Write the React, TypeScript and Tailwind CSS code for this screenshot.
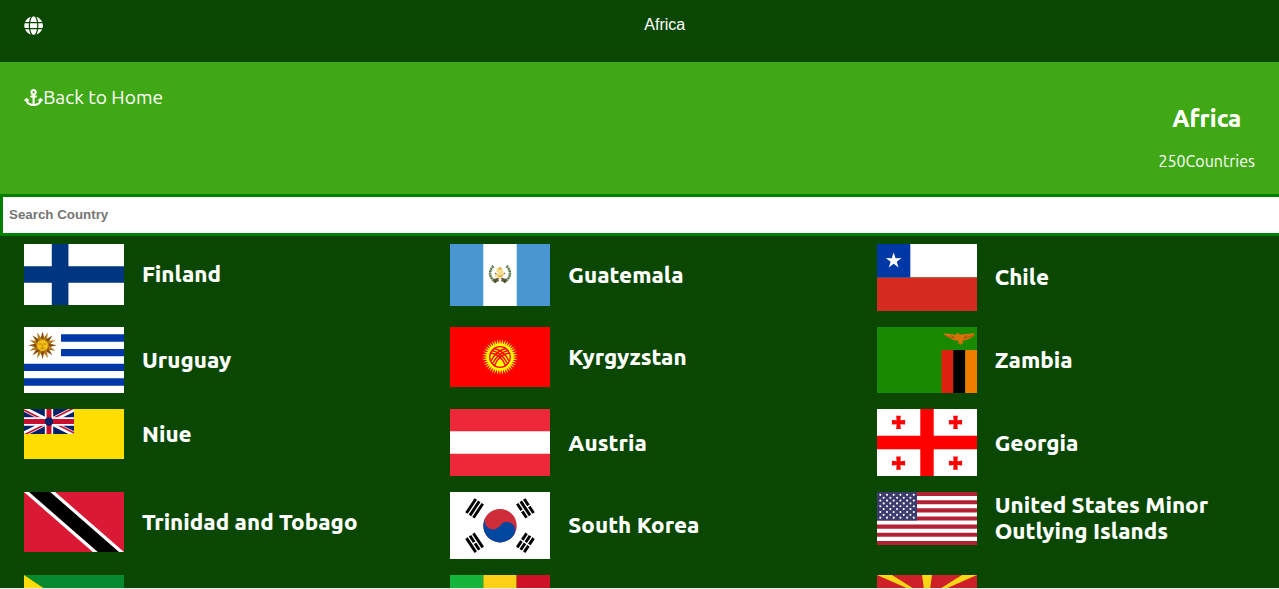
import { ReactNode } from "react";
import { FaAnchor, FaGlobe } from "react-icons/fa";

const range = (n: number) => Array.from({ length: n }, (_, i) => i);

function Flag({ h, box, children }: { h: number; box: string; children: ReactNode }) {
  return (
    <svg width={100} height={h} viewBox={box} preserveAspectRatio="none" className="block shrink-0">
      {children}
    </svg>
  );
}

const Finland = () => (
  <Flag h={61} box="0 0 18 11">
    <path fill="#fff" d="M0 0h18v11H0z" />
    <path fill="#003580" d="M0 4h18v3H0zM5 0h3v11H5z" />
  </Flag>
);

const Guatemala = () => (
  <Flag h={62} box="0 0 100 62">
    <path fill="#4997d0" d="M0 0h100v62H0z" />
    <path fill="#fff" d="M33.3 0h33.4v62H33.3z" />
    <g fill="none" stroke="#5c7c4b" strokeWidth="2.5" strokeDasharray="2 .5">
      <path d="M43.500 22c-5 5-5 12 3 16.500" />
      <path d="M56.500 22c5 5 5 12-3 16.500" />
    </g>
    <path d="M43.500 38l11.500-9M56.500 38l-11.500-9" stroke="#8a6a43" strokeWidth="1.300" />
    <path fill="#4d4a2b" d="M43 35l5-1 1 3-4 2zM57 35l-5-1-1 3 4 2z" opacity=".85" />
    <path fill="#f2dd8c" d="M46 27l1-3 4-1 2 3 1 4-2 4h-4l-4-2 4-3z" />
    <path fill="#d9b65a" d="M48 24l3-1 1 2-3 1zM48 31l5 0-1 2h-3z" />
  </Flag>
);

const Chile = () => (
  <Flag h={67} box="0 0 6 4">
    <path fill="#fff" d="M0 0h6v2H0z" />
    <path fill="#d52b1e" d="M0 2h6v2H0z" />
    <path fill="#0039a6" d="M0 0h2v2H0z" />
    <path fill="#fff" d="M1 .5l.112.345.364-.003-.295.212.115.345L1 1.183l-.296.216.115-.345-.295-.212.364.003z" />
  </Flag>
);

const Uruguay = () => (
  <Flag h={66} box="0 0 27 18">
    <path fill="#fff" d="M0 0h27v18H0z" />
    <path fill="#0038a8" d="M10 2h17v2H10zM10 6h17v2H10zM0 10h27v2H0zM0 14h27v2H0z" />
    <g transform="translate(5 5)">
      {range(16).map((i) => (
        <path key={i} d="M-.6-1.500L0-3.800.6-1.500z" fill={i % 2 ? "#b07a14" : "#8a4c0c"} transform={`rotate(${i * 22.5})`} />
      ))}
      <circle r="1.550" fill="#f4c010" stroke="#c08512" strokeWidth=".25" />
      <path d="M-.9-.35h.6M.3-.35h.6M0-.1v.4M-.5.75h1" stroke="#a06010" strokeWidth=".25" />
    </g>
  </Flag>
);

const Kyrgyzstan = () => (
  <Flag h={60} box="0 0 100 60">
    <path fill="red" d="M0 0h100v60H0z" />
    <g transform="translate(50 30)">
      {range(40).map((i) => (
        <path key={i} d="M-1.100-12L0-18 1.100-12z" fill="#ff0" transform={`rotate(${i * 9})`} />
      ))}
      <circle r="13.200" fill="#ff0" />
      <circle r="10.300" fill="#ff0" stroke="red" strokeWidth="1.300" />
      <g fill="none" stroke="red" strokeWidth="1.300">
        <path d="M-9 4C-6-2-1-7 6-8.500M-7.500 6.500C-4 0 1-5 8-6.500M-5.500 8.500C-3 2 2-3 9.500-4" />
        <path d="M9 4C6-2 1-7-6-8.500M7.500 6.500C4 0-1-5-8-6.500M5.500 8.500C3 2-2-3-9.500-4" />
      </g>
    </g>
  </Flag>
);

const Zambia = () => (
  <Flag h={66} box="0 0 100 66.67">
    <path fill="#198a00" d="M0 0h100v66.67H0z" />
    <path fill="#de2010" d="M64.500 23.300h12v43.400h-12z" />
    <path fill="#000" d="M76.300 23.300h12v43.400h-12z" />
    <path fill="#ef7d00" d="M88.200 23.300H100v43.400H88.200z" />
    <path
      fill="#d9700a"
      d="M66.800 6.200c4 1 8 .3 11.700 1.800l1.300-1.400 1.800-.3 1.200 1.600c4-1.500 9-.500 14.700-1.900-.3 3-1.500 4.300-4 5-2.500 1.600-5 2.500-8 2.700l.5 3.300-1.500-.3-.5 1.300-1-.2-.3-1.200-1.500.5.3-3.400c-3.500 0-6.500-1.200-9-2.700-2.500-.8-4.700-2-5.700-4.800z"
    />
    <path d="M68 8.800l9 2.500M96 8.800l-9 2.500M74 8.500l4 3M90 8.500l-4 3" stroke="#8a4f08" strokeWidth=".7" />
  </Flag>
);

const Niue = () => (
  <Flag h={50} box="0 0 100 50">
    <path fill="#fedd00" d="M0 0h100v50H0z" />
    <svg width="50" height="25" viewBox="0 0 60 30">
      <path fill="#012169" d="M0 0h60v30H0z" />
      <path d="M0 0l60 30M60 0L0 30" stroke="#fff" strokeWidth="6" />
      <path d="M0 1.200L28 15.200M60 28.800L32 14.800M60-1.200L30 13.800M0 31.200L30 16.200" stroke="#c8102e" strokeWidth="2" />
      <path d="M30 0v30M0 15h60" stroke="#fff" strokeWidth="10" />
      <path d="M30 0v30M0 15h60" stroke="#c8102e" strokeWidth="6" />
      <circle cx="30" cy="15" r="5" fill="#012169" />
    </svg>
  </Flag>
);

const Austria = () => (
  <Flag h={67} box="0 0 9 6">
    <path fill="#ed2939" d="M0 0h9v6H0z" />
    <path fill="#fff" d="M0 2h9v2H0z" />
  </Flag>
);

const Georgia = () => (
  <Flag h={67} box="0 0 100 66.67">
    <path fill="#fff" d="M0 0h100v66.67H0z" />
    <path fill="red" d="M43.300 0h13.400v66.67H43.300zM0 26.670h100v13.330H0z" />
    {[[21.5, 13.2], [78.5, 13.2], [21.5, 53.8], [78.5, 53.8]].map(([x, y]) => (
      <path
        key={`${x}-${y}`}
        fill="red"
        transform={`translate(${x} ${y})`}
        d="M-2.300-6.600h4.600L1.900-1.900 6.600-2.300v4.600L1.900 1.900 2.300 6.600h-4.600L-1.900 1.900-6.600 2.300v-4.600L-1.900-1.900z"
      />
    ))}
  </Flag>
);

const Trinidad = () => (
  <Flag h={60} box="0 0 100 60">
    <path fill="#da1a35" d="M0 0h100v60H0z" />
    <path fill="#fff" d="M0 0h31.200L100 60H68.800z" />
    <path fill="#000" d="M5 0h21.200L95 60H73.800z" />
  </Flag>
);

const bar = "M-5.600-2.900h11.200M-5.600 0h11.200M-5.600 2.900h11.200";

const SouthKorea = () => (
  <Flag h={67} box="0 0 100 66.67">
    <path fill="#fff" d="M0 0h100v66.67H0z" />
    <g transform="translate(50 33.500) rotate(33.700)">
      <circle r="16.670" fill="#cd2e3a" />
      <path fill="#0047a0" d="M-16.670 0a8.335 8.335 0 0 0 16.670 0a8.335 8.335 0 0 1 16.670 0a16.670 16.670 0 0 1-33.340 0z" />
    </g>
    <g strokeWidth="2" stroke="#000">
      <path transform="translate(24.600 16.300) rotate(-56.300) scale(1.500 1.450)" d={bar} />
      <g transform="translate(75.400 16.300) rotate(56.300) scale(1.500 1.450)">
        <path d={bar} />
        <path stroke="#fff" strokeWidth="1" d="M0-4.500v3M0 1.500v3" />
      </g>
      <g transform="translate(24.600 50.500) rotate(56.300) scale(1.500 1.450)">
        <path d={bar} />
        <path stroke="#fff" strokeWidth="1" d="M0-1.400v2.800" />
      </g>
      <g transform="translate(75.400 50.500) rotate(-56.300) scale(1.500 1.450)">
        <path d={bar} />
        <path stroke="#fff" strokeWidth="1" d="M0-4.500v9" />
      </g>
    </g>
  </Flag>
);

const UnitedStates = () => (
  <Flag h={53} box="0 0 100 52">
    <path fill="#fff" d="M0 0h100v52H0z" />
    {range(7).map((i) => (
      <path key={i} fill="#b22234" d={`M0 ${i * 8}h100v4H0z`} />
    ))}
    <path fill="#3c3b6e" d="M0 0h40v28H0z" />
    {range(9).flatMap((r) =>
      range(r % 2 ? 5 : 6).map((c) => (
        <circle key={`${r}-${c}`} cx={3.3 + (r % 2 ? 3.35 : 0) + c * 6.7} cy={2.8 + r * 2.8} r="1.050" fill="#fff" />
      )),
    )}
  </Flag>
);

const FrenchGuiana = () => (
  <Flag h={66.67} box="0 0 100 66.67">
    <path fill="#078930" d="M0 0h100v66.67z" />
    <path fill="#fcdd09" d="M0 0v66.67h100z" />
  </Flag>
);

const Mali = () => (
  <Flag h={66.67} box="0 0 3 2">
    <path fill="#14b53a" d="M0 0h1v2H0z" />
    <path fill="#fcd116" d="M1 0h1v2H1z" />
    <path fill="#ce1126" d="M2 0h1v2H2z" />
  </Flag>
);

const Macedonia = () => (
  <Flag h={50} box="0 0 100 50">
    <path fill="#ce2028" d="M0 0h100v50H0z" />
    <path
      fill="#f9d616"
      d="M0 0h15L50 22zM100 0H85L50 22zM0 50h15L50 25zM100 50H85L50 25zM45 0h10l-5 36zM45 50h10l-5-25zM0 20v10l50-5zM100 20v10l-50-5z"
    />
    <circle cx="50" cy="25" r="8" fill="#f9d616" stroke="#ce2028" strokeWidth="1.500" />
  </Flag>
);

const countries: { name: string; flag: ReactNode }[] = [
  { name: "Finland", flag: <Finland /> },
  { name: "Guatemala", flag: <Guatemala /> },
  { name: "Chile", flag: <Chile /> },
  { name: "Uruguay", flag: <Uruguay /> },
  { name: "Kyrgyzstan", flag: <Kyrgyzstan /> },
  { name: "Zambia", flag: <Zambia /> },
  { name: "Niue", flag: <Niue /> },
  { name: "Austria", flag: <Austria /> },
  { name: "Georgia", flag: <Georgia /> },
  { name: "Trinidad and Tobago", flag: <Trinidad /> },
  { name: "South Korea", flag: <SouthKorea /> },
  { name: "United States Minor Outlying Islands", flag: <UnitedStates /> },
  { name: "", flag: <FrenchGuiana /> },
  { name: "", flag: <Mali /> },
  { name: "", flag: <Macedonia /> },
];

export default function App() {
  return (
    <div className="h-[589px] overflow-hidden bg-[#e8e8ec] font-[Ubuntu,'Noto_Sans',sans-serif] text-white">
      <div className="flex h-[588px] flex-col overflow-hidden bg-[#0a4703]">
        <header className="grid h-[62px] shrink-0 grid-cols-[1fr_auto_1fr] px-6 pt-4">
          <FaGlobe className="size-[19.2px]" />
          <p className="ml-[50.5px] font-['Liberation_Sans',Arial,sans-serif] text-base leading-[18px]">Africa</p>
        </header>

        <section className="flex h-[132px] shrink-0 justify-between bg-[#41a815] px-6">
          <a href="#" className="mt-6 flex h-[22px] items-center text-[19.2px] leading-[22px] [font-weight:435]">
            <FaAnchor className="mt-px size-[19.2px]" />
            Back to Home
          </a>
          <div className="text-center">
            <h1 className="mt-[43px] text-2xl leading-[28px] font-extrabold">Africa</h1>
            <p className="mt-[19px] text-base leading-[18px] [font-weight:435]">250Countries</p>
          </div>
        </section>

        <input
          placeholder="Search Country"
          className="h-[42px] w-[1300px] shrink-0 border-[3px] border-[#008000] bg-white px-1.5 pb-0.5 font-['Liberation_Sans',Arial,sans-serif] text-[13.333px] font-bold text-black outline-none placeholder:text-[#757575]"
        />

        <ul className="grid auto-rows-[66.67px] grid-cols-3 items-start gap-y-4 pt-2">
          {countries.map(({ name, flag }, i) => (
            <li key={i} className="flex items-center gap-[18px] pl-6">
              {flag}
              <h2 className="w-[240px] pb-[0.3px] text-[22.4px] leading-[26px] font-extrabold">{name}</h2>
            </li>
          ))}
        </ul>
      </div>
    </div>
  );
}
